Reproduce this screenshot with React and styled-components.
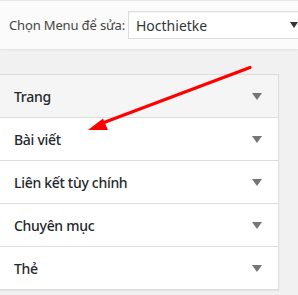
import React from "react";
import styled, { createGlobalStyle } from "styled-components";

const Global = createGlobalStyle`
  html, body { margin: 0; padding: 0; background: #f1f1f1; }
  body { font-family: "Noto Sans", "Open Sans", sans-serif; }
`;

const Page = styled.div`
  position: relative;
  width: 298px;
  height: 295px;
  overflow: hidden;
  background: #f1f1f1;
`;

const TopBar = styled.div`
  display: flex;
  align-items: center;
  height: 49px;
  padding-left: 9px;
  background: #fbfbfb;
  border-top: 1px solid #e8e8e8;
  box-shadow: 0 1px 2px rgba(0, 0, 0, 0.07);
  box-sizing: border-box;
`;

const Label = styled.span`
  flex: none;
  width: 119px;
  white-space: nowrap;
  font-size: 13px;
  color: #444;
  letter-spacing: -0.15px;
`;

const Select = styled.div`
  position: relative;
  flex: none;
  width: 200px;
  height: 28px;
  box-sizing: border-box;
  border: 1px solid #ddd;
  background: #fff;
  display: flex;
  align-items: center;
  padding-left: 7px;
  font-size: 14px;
  color: #32373c;
  box-shadow: inset 0 1px 2px rgba(0, 0, 0, 0.04);
`;

const SelectArrow = styled.span`
  position: absolute;
  left: 161px;
  top: 10px;
  width: 0;
  height: 0;
  border-left: 4px solid transparent;
  border-right: 4px solid transparent;
  border-top: 6px solid #333;
`;

const Panel = styled.div`
  margin-top: 25px;
  width: 279px;
  box-sizing: border-box;
  background: #fff;
  border: 1px solid #ddd;
  border-left: none;
  box-shadow: 0 1px 1px rgba(0, 0, 0, 0.05);
`;

const Row = styled.div`
  display: flex;
  align-items: center;
  justify-content: space-between;
  padding: 0 16px 0 14px;
  box-sizing: border-box;
  background: ${(p) => (p.$active ? "#f5f5f5" : "#fff")};
  border-top: ${(p) => (p.$first ? "none" : "1px solid #ddd")};
  height: ${(p) => (p.$first ? "42px" : "43px")};
`;

const Title = styled.span`
  font-size: 14px;
  font-weight: 500;
  color: #23282d;
  letter-spacing: -0.3px;
`;

const Caret = styled.span`
  width: 0;
  height: 0;
  border-left: 5px solid transparent;
  border-right: 5px solid transparent;
  border-top: 7px solid #72777c;
`;

const Overlay = styled.svg`
  position: absolute;
  left: 0;
  top: 0;
  pointer-events: none;
`;

const items = ["Trang", "Bài viết", "Liên kết tùy chính", "Chuyên mục", "Thẻ"];

export default function App() {
  return (
    <Page>
      <Global />
      <TopBar>
        <Label>Chọn Menu để sửa:</Label>
        <Select>
          Hocthietke
          <SelectArrow />
        </Select>
      </TopBar>
      <Panel>
        {items.map((t, i) => (
          <Row key={t} $first={i === 0} $active={i === 0}>
            <Title>{t}</Title>
            <Caret />
          </Row>
        ))}
      </Panel>
      <Overlay width="298" height="295" viewBox="0 0 298 295">
        <line x1="250" y1="67.5" x2="100" y2="124" stroke="#ff0000" strokeWidth="3.2" strokeLinecap="round" />
        <polygon points="88,130 103,118.5 108,130" fill="#ff0000" />
      </Overlay>
    </Page>
  );
}
